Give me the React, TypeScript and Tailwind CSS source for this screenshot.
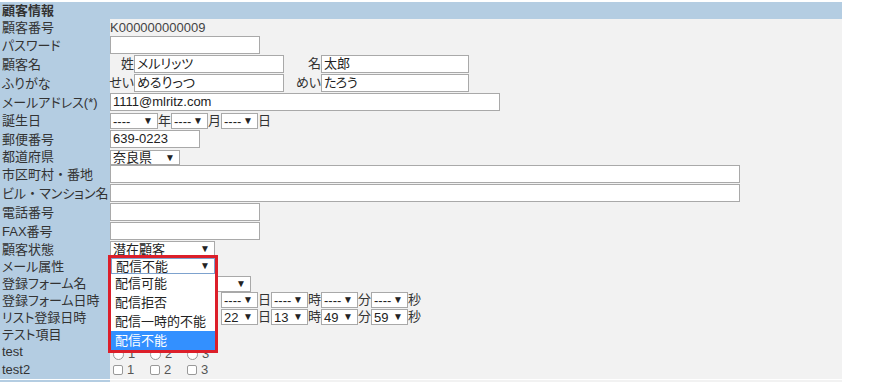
import React from "react";

const F = "font-['Liberation_Sans','Noto_Sans_CJK_JP',sans-serif] [font-feature-settings:'palt']";

function Lbl({ text }: { text: string }) {
  const parts = text.split("・");
  return (
    <>
      {parts.map((p, i) => (
        <React.Fragment key={i}>
          {i > 0 && <span className="[font-feature-settings:normal]">・</span>}
          {p}
        </React.Fragment>
      ))}
    </>
  );
}

function Row({ label, h, children }: { label: string; h: string; children?: React.ReactNode }) {
  return (
    <div className={`flex ${h}`}>
      <div className="w-[110px] shrink-0 bg-[#b4cde2] pl-[2px] flex items-center whitespace-nowrap text-[#333]">
        <Lbl text={label} />
      </div>
      <div className="flex-1 bg-[#f2f2f2] flex items-start">{children}</div>
    </div>
  );
}

function Inp({ w, value }: { w: string; value?: string }) {
  return (
    <input
      readOnly
      value={value ?? ""}
      className={`${w} h-[18px] border border-[#a9a9a9] bg-white px-[2px] text-[13px] text-[#222] outline-none ${F}`}
    />
  );
}

function Sel({ w, text, h }: { w: string; text: string; h?: string }) {
  return (
    <div className={`${w} ${h ?? "h-[16px]"} border border-[#a9a9a9] bg-white flex items-center justify-between pl-[2px] pr-[4px] text-[#222] overflow-hidden`}>
      {text ? <span className="leading-[14px] whitespace-nowrap pt-[1px]">{text}</span> : <span />}
      <span className="text-[10px] leading-none">▼</span>
    </div>
  );
}

function Ch({ c }: { c: string }) {
  return <span className="w-[13px] text-center leading-[16px] text-[#333]">{c}</span>;
}

function DateRow({ vals }: { vals: string[] }) {
  return (
    <div className="flex items-center">
      <div className="w-[48px] h-[16px] border border-[#a9a9a9] bg-white" />
      <span className="w-[13px]" />
      <div className="w-[37px] h-[16px] border border-[#a9a9a9] bg-white" />
      <span className="w-[13px]" />
      <Sel w="w-[37px]" text={vals[0]} />
      <Ch c="日" />
      <Sel w="w-[37px]" text={vals[1]} />
      <Ch c="時" />
      <Sel w="w-[37px]" text={vals[2]} />
      <Ch c="分" />
      <Sel w="w-[37px]" text={vals[3]} />
      <Ch c="秒" />
    </div>
  );
}

export default function App() {
  return (
    <div className={`relative w-[870px] h-[382px] bg-white overflow-hidden text-[13px] ${F}`}>
      <div className="w-[842px] pt-[2px]">
        <div className="h-[17px] bg-[#b4cde2] pl-[2px] flex items-center font-bold text-[#333]">顧客情報</div>
        <Row label="顧客番号" h="h-[17px]">
          <span className="h-full flex items-center text-[#444]">K000000000009</span>
        </Row>
        <Row label="パスワード" h="h-[19px]">
          <Inp w="w-[150px]" />
        </Row>
        <Row label="顧客名" h="h-[19px]">
          <span className="w-[24px] text-right h-[18px] flex items-center justify-end text-[#333]">姓</span>
          <Inp w="w-[150px]" value="メルリッツ" />
          <span className="w-[37px] h-[18px] flex items-center justify-end text-[#333]">名</span>
          <Inp w="w-[148px]" value="太郎" />
        </Row>
        <Row label="ふりがな" h="h-[19px]">
          <span className="w-[24px] h-[18px] flex items-center justify-end text-[#333] whitespace-nowrap">せい</span>
          <Inp w="w-[150px]" value="めるりっつ" />
          <span className="w-[37px] h-[18px] flex items-center justify-end text-[#333] whitespace-nowrap">めい</span>
          <Inp w="w-[148px]" value="たろう" />
        </Row>
        <Row label="メールアドレス(*)" h="h-[19px]">
          <Inp w="w-[390px]" value="1111@mlritz.com" />
        </Row>
        <Row label="誕生日" h="h-[18px]">
          <div className="flex items-center pt-[1px]">
            <Sel w="w-[48px]" text="----" />
            <Ch c="年" />
            <Sel w="w-[37px]" text="----" />
            <Ch c="月" />
            <Sel w="w-[37px]" text="----" />
            <Ch c="日" />
          </div>
        </Row>
        <Row label="郵便番号" h="h-[19px]">
          <Inp w="w-[90px]" value="639-0223" />
        </Row>
        <Row label="都道府県" h="h-[16px]">
          <div className="pt-[1px]">
            <Sel w="w-[70px]" h="h-[15px]" text="奈良県" />
          </div>
        </Row>
        <Row label="市区町村・番地" h="h-[19px]">
          <Inp w="w-[630px]" />
        </Row>
        <Row label="ビル・マンション名" h="h-[19px]">
          <Inp w="w-[630px]" />
        </Row>
        <Row label="電話番号" h="h-[19px]">
          <Inp w="w-[150px]" />
        </Row>
        <Row label="FAX番号" h="h-[19px]">
          <Inp w="w-[150px]" />
        </Row>
        <Row label="顧客状態" h="h-[17px]">
          <Sel w="w-[105px]" text="潜在顧客" />
        </Row>
        <Row label="メール属性" h="h-[17px]">
          <Sel w="w-[105px]" text="" />
        </Row>
        <Row label="登録フォーム名" h="h-[17px]">
          <div className="pt-[1px]">
            <Sel w="w-[141px]" text="" />
          </div>
        </Row>
        <Row label="登録フォーム日時" h="h-[17px]">
          <DateRow vals={["----", "----", "----", "----"]} />
        </Row>
        <Row label="リスト登録日時" h="h-[17px]">
          <DateRow vals={["22", "13", "49", "59"]} />
        </Row>
        <Row label="テスト項目" h="h-[17px]" />
        <Row label="test" h="h-[17px]">
          <div className="flex items-end h-full text-[#555] translate-y-[1px]">
            {["1", "2", "3"].map((n) => (
              <div key={n} className="flex items-center w-[37px] pl-[3px]">
                <span className="w-[11px] h-[11px] rounded-full border border-[#999] bg-white" />
                <span className="ml-[4px] leading-[14px]">{n}</span>
              </div>
            ))}
          </div>
        </Row>
        <Row label="test2" h="h-[19px]">
          <div className="flex items-center h-full text-[#555]">
            {["1", "2", "3"].map((n) => (
              <div key={n} className="flex items-center w-[37px] pl-[3px]">
                <span className="w-[10px] h-[10px] rounded-[2px] border border-[#999] bg-white" />
                <span className="ml-[4px]">{n}</span>
              </div>
            ))}
          </div>
        </Row>
        <div className="flex h-[1px] bg-white" />
        <Row label="" h="h-[20px]" />
      </div>

      <div className="absolute left-[108px] top-[255px] w-[110px] h-[98px] border-[3px] border-[#dc1f2a] bg-white z-10 flex flex-col text-[#222]">
        <div className="h-[16px] border border-[#7da2ce] flex items-center justify-between pl-[4px] pr-[4px]">
          <span className="leading-[14px] pt-[1px]">配信不能</span>
          <span className="text-[10px] leading-none">▼</span>
        </div>
        <div className="h-[19px] flex items-center pl-[4px]">配信可能</div>
        <div className="h-[19px] flex items-center pl-[4px]">配信拒否</div>
        <div className="h-[19px] flex items-center pl-[4px]">配信一時的不能</div>
        <div className="h-[19px] flex items-center pl-[4px] bg-[#3390ff] text-white">配信不能</div>
      </div>
    </div>
  );
}
